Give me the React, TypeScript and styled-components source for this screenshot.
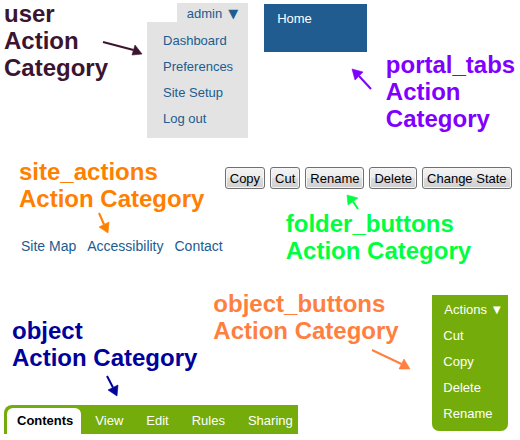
import React from "react";
import styled, { createGlobalStyle } from "styled-components";

const GlobalStyle = createGlobalStyle`
  *, *::before, *::after { box-sizing: border-box; }
  body {
    margin: 0;
    background: #fff;
    font-family: "Liberation Sans", Arial, sans-serif;
    font-size: 13px;
  }
  ul { list-style: none; margin: 0; padding: 0; }
`;

const Page = styled.main`
  display: flex;
  flex-direction: column;
  gap: 20px;
`;

const Row = styled.section`
  display: flex;
  align-items: flex-start;
`;

const Caption = styled.h2<{ $color: string }>`
  margin: 0;
  color: ${(p) => p.$color};
  font-size: 24px;
  font-weight: 700;
  line-height: 27px;
  white-space: nowrap;
`;

const Drawing = styled.svg`
  display: block;
  flex: none;
  overflow: visible;
`;

type Point = [number, number];

interface ArrowProps {
  className?: string;
  color: string;
  width: number;
  height: number;
  from: Point;
  head: [Point, Point, Point];
}

function Arrow({ className, color, width, height, from, head }: ArrowProps) {
  const [, a, b] = head;
  return (
    <Drawing
      className={className}
      width={width}
      height={height}
      viewBox={`0 0 ${width} ${height}`}
      aria-hidden="true"
    >
      <line
        x1={from[0]}
        y1={from[1]}
        x2={(a[0] + b[0]) / 2}
        y2={(a[1] + b[1]) / 2}
        stroke={color}
        strokeWidth={2}
      />
      <polygon
        points={head.map((p) => p.join(",")).join(" ")}
        fill={color}
        stroke={color}
        strokeWidth={0.6}
      />
    </Drawing>
  );
}

/* User menu */

const UserCallout = styled.div`
  display: flex;
  align-items: flex-start;
  padding-left: 4px;
`;

const UserArrow = styled(Arrow)`
  margin: 40px 4px 0 -6px;
`;

const UserMenu = styled.nav`
  display: flex;
  flex-direction: column;
  align-items: flex-end;
  margin-top: 3px;
`;

const UserToggle = styled.button`
  display: flex;
  align-items: center;
  gap: 6px;
  border: 0;
  padding: 3px 10px 0;
  background: #e3e3e3;
  color: #205c90;
  font: inherit;
  line-height: 16px;
  white-space: nowrap;
`;

const MenuLink = styled.a`
  display: block;
  color: inherit;
  line-height: 26px;
  text-decoration: none;
  white-space: nowrap;
`;

const UserItems = styled.ul`
  padding: 6px 15px 6px 16px;
  background: #e3e3e3;
  color: #205c90;
`;

/* Portal tabs */

const PortalGroup = styled.div`
  display: flex;
  flex-direction: column;
  align-items: flex-start;
  margin: 4px 14px 0 16px;
  padding-right: 5px;
`;

const PortalTabs = styled.nav`
  padding: 6px 55px 24px 13px;
  background: #205c90;
  color: #fff;
`;

const PortalLink = styled.a`
  display: block;
  color: inherit;
  line-height: 18px;
  text-decoration: none;
`;

const PortalArrow = styled(Arrow)`
  align-self: flex-end;
  margin: 16px -5px 0 0;
`;

const PortalCaption = styled(Caption)`
  margin-top: 51px;
`;

/* Site actions */

const SiteGroup = styled.div`
  display: flex;
  flex-direction: column;
  padding-left: 19px;
`;

const SiteArrow = styled(Arrow)`
  margin-left: 79px;
`;

const SiteLinks = styled.nav`
  display: flex;
  gap: 11px;
  padding: 4px 0 0 2px;
`;

const SiteLink = styled.a`
  color: #205c90;
  font-size: 14px;
  line-height: 16px;
  text-decoration: none;
  white-space: nowrap;
`;

/* Folder buttons */

const FolderGroup = styled.div`
  display: flex;
  flex-direction: column;
  margin: 9px 0 0 2px;
`;

const ButtonBar = styled.div`
  display: flex;
  gap: 5px;
`;

const FolderButton = styled.button`
  height: 22px;
  padding: 0 4px;
  border: 1px solid #707070;
  border-radius: 3px;
  background: linear-gradient(#f3f3f3, #ebebeb 50%, #dddddd 50%, #cfcfcf);
  box-shadow: inset 0 0 0 1px #f6f6f6;
  color: #000;
  font: inherit;
  white-space: nowrap;
`;

const FolderCallout = styled.div`
  padding: 5px 0 0 61px;
`;

const FolderArrow = styled(Arrow)`
  margin-left: 60px;
`;

/* Object tabs and object buttons */

const ObjectRow = styled(Row)`
  margin-top: 6px;
`;

const ObjectArea = styled.div`
  display: flex;
  flex-direction: column;
  align-items: flex-start;
`;

const Callouts = styled.div`
  display: flex;
  align-items: flex-start;
  gap: 16px;
  padding-left: 12px;
`;

const ObjectCallout = styled.div`
  margin-top: 27px;
`;

const ObjectArrow = styled(Arrow)`
  margin: 4px 0 0 94px;
`;

const ActionArrow = styled(Arrow)`
  margin: 5px 0 0 158px;
`;

const TabBar = styled.nav`
  display: flex;
  gap: 5px;
  margin: 8px 0 0 4px;
  padding: 3px 0 0 3px;
  border-top-left-radius: 8px;
  background: #74ad0b;
`;

const Tab = styled.a<{ $active?: boolean }>`
  padding: 0 9px;
  border-radius: 6px 6px 0 0;
  background: ${(p) => (p.$active ? "#fff" : "transparent")};
  color: ${(p) => (p.$active ? "#000" : "#fff")};
  font-weight: ${(p) => (p.$active ? 700 : 400)};
  line-height: 26px;
  text-decoration: none;
  &:first-child { padding: 0 8px 0 10px; }
  &:last-child { padding-right: 5px; }
`;

const ActionsMenu = styled.nav`
  margin: 5px 0 0 21px;
  padding: 0 7px 4px 11px;
  border-radius: 0 0 7px 7px;
  background: #74ad0b;
  color: #fff;
`;

const ActionsToggle = styled.button`
  display: flex;
  align-items: center;
  gap: 6px;
  border: 0;
  padding: 2px 0 0 1px;
  background: none;
  color: inherit;
  font: inherit;
  line-height: 26px;
  white-space: nowrap;
`;

const Marker = styled.span<{ $size: number }>`
  font-family: "DejaVu Sans", sans-serif;
  font-size: ${(p) => p.$size}px;
`;

const userItems = ["Dashboard", "Preferences", "Site Setup", "Log out"];
const siteActions = ["Site Map", "Accessibility", "Contact"];
const folderButtons = ["Copy", "Cut", "Rename", "Delete", "Change State"];
const objectTabs = ["Contents", "View", "Edit", "Rules", "Sharing"];
const objectButtons = ["Cut", "Copy", "Delete", "Rename"];

export default function App() {
  return (
    <>
      <GlobalStyle />
      <Page>
        <Row>
          <UserCallout>
            <Caption $color="#3b152f">
              user<br />Action<br />Category
            </Caption>
            <UserArrow color="#3b152f" width={41} height={16} from={[1, 2]} head={[[40, 14], [33, 5], [30, 15]]} />
          </UserCallout>
          <UserMenu aria-label="User">
            <UserToggle type="button">
              admin <Marker $size={13}>▼</Marker>
            </UserToggle>
            <UserItems>
              {userItems.map((item) => (
                <li key={item}><MenuLink href="#">{item}</MenuLink></li>
              ))}
            </UserItems>
          </UserMenu>
          <PortalGroup>
            <PortalTabs aria-label="Portal">
              <PortalLink href="#">Home</PortalLink>
            </PortalTabs>
            <PortalArrow color="#7f00ff" width={21} height={22} from={[20, 21]} head={[[1, 1], [12, 4], [4, 12]]} />
          </PortalGroup>
          <PortalCaption $color="#7f00ff">
            portal_tabs<br />Action<br />Category
          </PortalCaption>
        </Row>

        <Row>
          <SiteGroup>
            <Caption $color="#ff7f00">
              site_actions<br />Action Category
            </Caption>
            <SiteArrow color="#ff7f00" width={12} height={22} from={[1, 1]} head={[[10, 21], [11, 10], [1, 15]]} />
            <SiteLinks aria-label="Site actions">
              {siteActions.map((item) => (
                <SiteLink key={item} href="#">{item}</SiteLink>
              ))}
            </SiteLinks>
          </SiteGroup>
          <FolderGroup>
            <ButtonBar>
              {folderButtons.map((item) => (
                <FolderButton key={item} type="button">{item}</FolderButton>
              ))}
            </ButtonBar>
            <FolderCallout>
              <FolderArrow color="#00ff40" width={14} height={16} from={[12, 15]} head={[[1, 1], [12, 4], [2, 11]]} />
              <Caption $color="#00ff40">
                folder_buttons<br />Action Category
              </Caption>
            </FolderCallout>
          </FolderGroup>
        </Row>

        <ObjectRow>
          <ObjectArea>
            <Callouts>
              <ObjectCallout>
                <Caption $color="#00009b">
                  object<br />Action Category
                </Caption>
                <ObjectArrow color="#00009b" width={12} height={22} from={[1, 1]} head={[[11, 21], [12, 10], [2, 15]]} />
              </ObjectCallout>
              <div>
                <Caption $color="#ff7f3f">
                  object_buttons<br />Action Category
                </Caption>
                <ActionArrow color="#ff7f3f" width={40} height={21} from={[1, 1]} head={[[39, 20], [33, 10], [28, 20]]} />
              </div>
            </Callouts>
            <TabBar aria-label="Object">
              {objectTabs.map((item, i) => (
                <Tab key={item} href="#" $active={i === 0}>{item}</Tab>
              ))}
            </TabBar>
          </ObjectArea>
          <ActionsMenu aria-label="Object actions">
            <ActionsToggle type="button">
              Actions <Marker $size={10}>▼</Marker>
            </ActionsToggle>
            <ul>
              {objectButtons.map((item) => (
                <li key={item}><MenuLink href="#">{item}</MenuLink></li>
              ))}
            </ul>
          </ActionsMenu>
        </ObjectRow>
      </Page>
    </>
  );
}
